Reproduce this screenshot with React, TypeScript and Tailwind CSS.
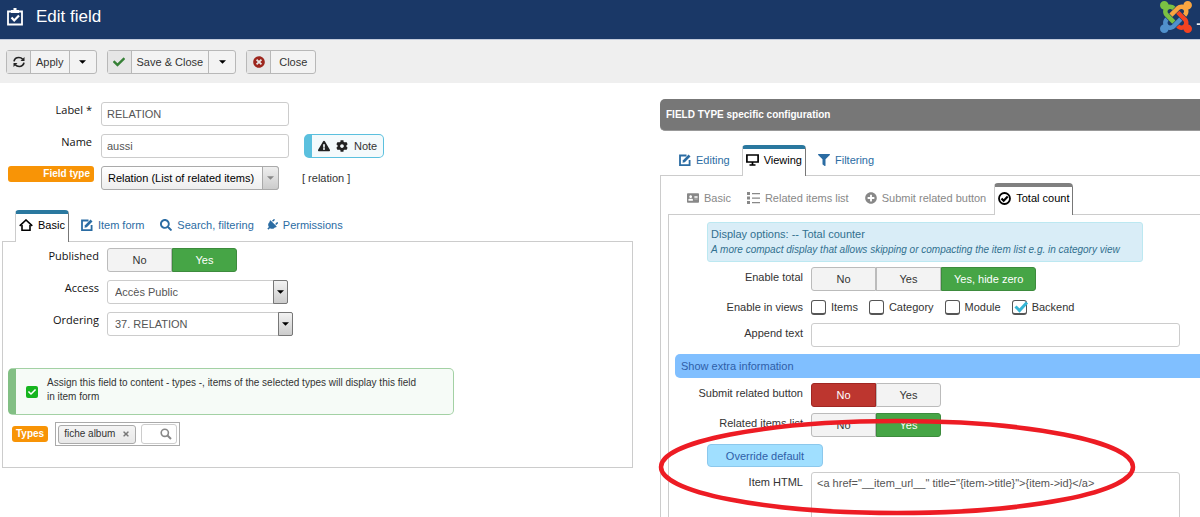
import { useState } from 'react'
import type { ReactNode } from 'react'
import clsx from 'clsx'
import {
  FaAddressCard,
  FaCheck,
  FaCog,
  FaExclamationTriangle,
  FaFilter,
  FaPlug,
  FaPlusCircle,
  FaSearch,
  FaTimes,
  FaTimesCircle,
} from 'react-icons/fa'

export default function App() {
  return (
    <div className="h-screen overflow-hidden bg-white font-['Liberation_Sans',Arial,sans-serif] text-[11px] leading-4 text-[#333]">
      <header className="flex h-[39px] items-center overflow-hidden bg-[#1a3867] pb-1.5 pl-[7px] text-white">
        <ClipboardIcon />
        <h1 className="ml-[13px] text-[17px] leading-5">Edit field</h1>
        <JoomlaLogo />
      </header>

      <div className="flex h-[44px] items-center gap-2.5 border-t border-[#c3cbdc] bg-[#efefef] px-1.5">
        <ToolbarButton icon={<RefreshIcon />} label="Apply" menu />
        <ToolbarButton icon={<FaCheck size={12} className="text-[#378137]" />} label="Save & Close" menu />
        <ToolbarButton icon={<FaTimesCircle size={12} className="text-[#9d261d]" />} label="Close" />
      </div>

      <main className="grid grid-cols-[55%_minmax(0,1fr)]">
        <GeneralSettings />
        <TypeSettings />
      </main>
    </div>
  )
}

function GeneralSettings() {
  return (
    <section className="pt-[19px] pr-[27px] pl-0.5">
      <div className="flex flex-col gap-2">
        <div className="flex">
          <label htmlFor="label" className="mr-[9px] w-[90px] text-right font-['Open_Sans',sans-serif] font-medium text-[#111]">
            Label *
          </label>
          <input id="label" defaultValue="RELATION" className="h-6 w-[188px] rounded-[3px] border border-[#ccc] px-[5px] text-[#555]" />
        </div>
        <div className="flex">
          <label htmlFor="name" className="mr-[9px] w-[90px] text-right font-['Open_Sans',sans-serif] font-medium text-[#111]">
            Name
          </label>
          <input id="name" defaultValue="aussi" className="h-6 w-[188px] rounded-[3px] border border-[#ccc] px-[5px] text-[#555]" />
          <button className="ml-[15px] flex h-6 items-center rounded-[5px] border border-l-8 border-[#5bc0de] bg-[#f4fafc] px-1.5">
            <FaExclamationTriangle size={12} className="mr-1.5 text-[#222]" />
            <FaCog size={12} className="mr-1.5 text-[#222]" />
            Note
          </button>
        </div>
        <div className="flex">
          <label htmlFor="type" className="mr-[7px] ml-1.5 h-4 w-[86px] rounded-[3px] bg-[#f89406] pr-1 text-right text-[10px] leading-4 font-bold text-white">
            Field type
          </label>
          <div className="relative w-[178px]">
            <select id="type" className="h-6 w-full appearance-none rounded-[3px] border border-[#aaa] bg-gradient-to-b from-white to-[#eee] pl-1.5 text-black">
              <option>Relation (List of related items)</option>
            </select>
            <span className="pointer-events-none absolute inset-y-0 right-0 flex w-[17px] items-center justify-center rounded-r-[3px] border border-[#aaa] bg-gradient-to-b from-[#eee] to-[#ccc] text-[#888]">
              <Caret />
            </span>
          </div>
          <span className="ml-[23px] self-center">[ relation ]</span>
        </div>
      </div>

      <nav className="mt-5 ml-[13px] flex h-8">
        <Tab active edge="border-t-[#2a789f]" icon={<HomeIcon />}>Basic</Tab>
        <Tab className="ml-3 text-[#2b6ca3]" icon={<EditIcon />}>Item form</Tab>
        <Tab className="ml-4 text-[#2b6ca3]" icon={<FaSearch size={12} />}>Search, filtering</Tab>
        <Tab className="ml-3 text-[#2b6ca3]" icon={<FaPlug size={12} className="rotate-45" />}>Permissions</Tab>
      </nav>

      <div className="-mt-px border border-[#ccc] pt-1.5 pb-[21px]">
        <div className="flex flex-col gap-2">
          <div className="flex">
            <span id="published" className="mr-2 w-[96px] text-right font-['Open_Sans',sans-serif] font-medium text-[#111]">
              Published
            </span>
            <Toggle labelledBy="published" options={['No', 'Yes']} initial={1} />
          </div>
          <div className="flex">
            <label htmlFor="access" className="mr-2 w-[96px] text-right font-['Open_Sans',sans-serif] font-medium text-[#111]">
              Access
            </label>
            <div className="relative w-[181px]">
              <select id="access" className="h-6 w-full appearance-none rounded-[3px] border border-[#ccc] bg-white pl-[7px] text-[#555]">
                <option>Accès Public</option>
              </select>
              <SelectArrow />
            </div>
          </div>
          <div className="flex">
            <label htmlFor="ordering" className="mr-2 w-[96px] text-right font-['Open_Sans',sans-serif] font-medium text-[#111]">
              Ordering
            </label>
            <div className="relative w-[186px]">
              <select id="ordering" className="h-6 w-full appearance-none rounded-[3px] border border-[#ccc] bg-white pl-[7px] text-[#555]">
                <option>37. RELATION</option>
              </select>
              <SelectArrow />
            </div>
          </div>
        </div>

        <div className="mt-8 ml-[5px] flex h-[47px] w-[446px] items-center rounded-[5px] border border-l-8 border-[#a3d1a4] border-l-[#82bf84] bg-[#f6fbf7] pl-2.5">
          <span className="flex size-3 shrink-0 items-center justify-center rounded-[2px] bg-[#16b51f] text-white">
            <FaCheck size={8} />
          </span>
          <p className="ml-[9px] pb-1 text-[10px] leading-[14px]">
            Assign this field to content - types -, items of the selected types will display this field
            <br />
            in item form
          </p>
        </div>

        <div className="mt-[7px] ml-[9px] flex">
          <label htmlFor="types" className="mt-1 h-4 rounded-[3px] bg-[#f89406] px-1 text-[10px] leading-4 font-bold text-white">
            Types
          </label>
          <div className="ml-[7px] flex h-6 items-center gap-[5px] border border-[#aaa] px-0.5">
            <button className="flex h-[19px] items-center gap-[7px] rounded-[3px] border border-[#aaa] bg-gradient-to-b from-[#f4f4f4] to-[#e8e8e8] px-[5px] text-[10px]">
              fiche album
              <FaTimes size={8} className="text-[#777]" />
            </button>
            <span className="flex h-5 items-center rounded-[3px] border border-[#ccc] pr-1 text-[#888]">
              <input id="types" className="w-[18px]" />
              <svg viewBox="0 0 12 12" className="size-3" fill="none" stroke="currentColor" strokeWidth="1.6">
                <circle cx="4.8" cy="4.8" r="3.6" />
                <path d="M7.5 7.5 11 11" strokeWidth="2" />
              </svg>
            </span>
          </div>
        </div>
      </div>
    </section>
  )
}

function TypeSettings() {
  return (
    <section className="relative pt-4">
      <h2 className="rounded-l-[5px] border-b border-[#999] bg-[#777] px-1.5 text-[10px] leading-[31px] font-bold text-white">
        FIELD TYPE specific configuration
      </h2>

      <nav className="mt-3.5 ml-[19px] flex h-[31px]">
        <Tab className="mr-3 text-[#2b6ca3]" icon={<EditIcon />}>Editing</Tab>
        <Tab active edge="border-t-[#2a789f]" icon={<MonitorIcon />}>Viewing</Tab>
        <Tab className="ml-3 text-[#2b6ca3]" icon={<FaFilter size={12} />}>Filtering</Tab>
      </nav>

      <div className="-mt-px border-t border-l border-[#ccc] pt-[7px] pl-[7px]">
        <nav className="ml-[19px] flex h-8 text-[#888]">
          <Tab icon={<FaAddressCard size={12} />}>Basic</Tab>
          <Tab className="ml-4" icon={<ListIcon />}>Related items list</Tab>
          <Tab className="mr-2 ml-4" icon={<FaPlusCircle size={12} />}>Submit related button</Tab>
          <Tab active edge="border-t-[#808080]" icon={<CheckCircleIcon />}>Total count</Tab>
        </nav>

        <div className="-mt-px border-t border-l border-[#ccc] pt-[7px]">
          <div className="ml-[38px] w-[436px] rounded-[3px] border border-[#bce8f1] bg-[#d9edf7] px-[3px] py-[3px] text-[#31708f]">
            <p>Display options: -- Total counter</p>
            <p className="text-[10px] leading-4 italic">A more compact display that allows skipping or compacting the item list e.g. in category view</p>
          </div>

          <div className="mt-[5px] flex">
            <span id="total" className="mr-2 w-[134px] text-right leading-5">Enable total</span>
            <Toggle labelledBy="total" options={['No', 'Yes', 'Yes, hide zero']} initial={2} />
          </div>
          <div className="mt-2 flex">
            <span className="mr-2 w-[134px] text-right">Enable in views</span>
            <div className="flex gap-[11px]">
              <ViewCheckbox label="Items" />
              <ViewCheckbox label="Category" />
              <ViewCheckbox label="Module" />
              <ViewCheckbox label="Backend" initial />
            </div>
          </div>
          <div className="mt-2 flex">
            <label htmlFor="append" className="mr-2 w-[134px] text-right leading-5">Append text</label>
            <input id="append" className="mr-5 h-6 flex-1 rounded-[3px] border border-[#ccc] px-[5px]" />
          </div>

          <button className="mt-[7px] ml-1.5 block h-6 w-full rounded-[5px] bg-[#80bfff] px-1.5 text-left text-[#2f5ea8]">
            Show extra information
          </button>

          <div className="mt-[5px] flex">
            <span id="submit" className="mr-2 w-[134px] text-right leading-5">Submit related button</span>
            <Toggle labelledBy="submit" options={['No', 'Yes']} initial={0} />
          </div>
          <div className="mt-1.5 flex">
            <span id="related" className="mr-2 w-[134px] text-right leading-5">Related items list</span>
            <Toggle labelledBy="related" options={['No', 'Yes']} initial={1} />
          </div>
          <button className="mt-[7px] ml-[38px] block h-[23px] w-[116px] rounded-[4px] border border-[#8cc8ec] bg-[#a0dfff] text-[#2f5ea8]">
            Override default
          </button>
          <div className="mt-[5px] flex">
            <label htmlFor="html" className="mr-2 w-[134px] text-right leading-5">Item HTML</label>
            <textarea
              id="html"
              spellCheck={false}
              defaultValue={'<a href="__item_url__" title="{item->title}">{item->id}</a>'}
              className="mr-5 h-20 flex-1 resize-none rounded-[3px] border border-[#ccc] px-[5px] py-0.5 text-[#555]"
            />
          </div>
        </div>
      </div>

      {/* hand-drawn highlight round the override fields */}
      <svg viewBox="0 0 480 100" className="pointer-events-none absolute top-[334px] -left-1 h-[100px] w-[480px]">
        <ellipse cx="241" cy="50" rx="236" ry="46" fill="none" stroke="#ed1c24" strokeWidth="4.500" />
      </svg>
    </section>
  )
}

function ToolbarButton({ icon, label, menu }: { icon: ReactNode; label: string; menu?: boolean }) {
  return (
    <div className="flex h-6 rounded-[3px] border border-[#b8b8b8] bg-[#f3f3f3]">
      <button className="flex items-center">
        <span className="flex h-full w-6 items-center justify-center border-r border-[#b8b8b8] bg-[#e6e6e6]">{icon}</span>
        <span className={menu ? 'px-[5px]' : 'px-2'}>{label}</span>
      </button>
      {menu && (
        <button aria-label={`${label} options`} className="flex w-[27px] items-center justify-center border-l border-[#b8b8b8] text-black">
          <Caret />
        </button>
      )}
    </div>
  )
}

function Tab({
  active,
  edge,
  icon,
  className,
  children,
}: {
  active?: boolean
  edge?: string
  icon: ReactNode
  className?: string
  children: ReactNode
}) {
  return (
    <a
      href="#"
      className={clsx(
        'flex shrink-0 items-center gap-[5px] whitespace-nowrap',
        active && 'z-10 rounded-t-[4px] border-x border-t-4 border-r-[#777] border-l-[#ccc] bg-white px-[3px] pb-1.5 text-black',
        !active && 'pb-0.5',
        edge,
        className,
      )}
    >
      {icon}
      {children}
    </a>
  )
}

function Toggle({ labelledBy, options, initial }: { labelledBy: string; options: string[]; initial: number }) {
  const [selected, setSelected] = useState(initial)
  return (
    <div role="group" aria-labelledby={labelledBy} className="flex h-6">
      {options.map((option, i) => (
        <button
          key={option}
          onClick={() => setSelected(i)}
          aria-pressed={i === selected}
          className={clsx(
            'min-w-[65px] border px-3 first:rounded-l-[3px] last:rounded-r-[3px]',
            i !== selected && 'border-[#bbb] bg-[#f3f3f3]',
            i === selected && option === 'No' && 'border-[#a02622] bg-[#bd362f] text-white',
            i === selected && option !== 'No' && 'border-[#3d8b3d] bg-[#46a546] text-white',
          )}
        >
          {option}
        </button>
      ))}
    </div>
  )
}

function ViewCheckbox({ label, initial = false }: { label: string; initial?: boolean }) {
  const [checked, setChecked] = useState(initial)
  return (
    <label className="flex items-center">
      <span className="relative mr-[5px] flex">
        <input
          type="checkbox"
          checked={checked}
          onChange={(e) => setChecked(e.target.checked)}
          className="size-[15px] appearance-none rounded-[3px] border border-b-2 border-[#555] bg-white"
        />
        {checked && (
          <svg viewBox="0 0 16 14" className="pointer-events-none absolute top-0 left-0.5 h-3.5 w-4" fill="none" stroke="#35b5d5" strokeWidth="3">
            <path d="M1.500 6.500 5.500 10.500 13 2.500" />
          </svg>
        )}
      </span>
      {label}
    </label>
  )
}

function SelectArrow() {
  return (
    <span className="pointer-events-none absolute inset-y-0 right-0 flex w-[15px] items-center justify-center rounded-r-[2px] border border-[#777] bg-gradient-to-b from-[#f2f2f2] to-[#ccc] text-black">
      <Caret />
    </span>
  )
}

function Caret() {
  return (
    <svg viewBox="0 0 8 4" className="h-1 w-[7px]" fill="currentColor">
      <path d="M0 0h8L4 4z" />
    </svg>
  )
}

function ClipboardIcon() {
  return (
    <svg viewBox="0 0 16 18" className="h-[18px] w-4" fill="none" stroke="currentColor" strokeWidth="1.8">
      <path d="M1 3.500h14v13H1z" />
      <path d="M4 2h8v3H4zM6.500 0h3v2h-3z" fill="currentColor" stroke="none" />
      <path d="m4.500 9.500 2.700 3L12 7.500" strokeWidth="2.200" />
    </svg>
  )
}

function RefreshIcon() {
  return (
    <svg viewBox="0 0 12 12" className="size-3" fill="none" stroke="#222" strokeWidth="1.700">
      <path d="M1 5.300C1.500 2.900 3.400 1.500 5.800 1.500c1.600 0 2.900.6 3.900 1.800M11 6.700c-.5 2.400-2.400 3.800-4.800 3.800-1.600 0-2.900-.6-3.900-1.800" />
      <path d="M11.500 1v4h-4zM.5 11V7h4z" fill="#222" stroke="none" />
    </svg>
  )
}

function EditIcon() {
  return (
    <svg viewBox="0 0 12 12" className="size-3" fill="none" stroke="currentColor" strokeWidth="1.800">
      <path d="M7.500 1.500H1v9.600h9.600V6" />
      <path d="M3.500 8.700 4 6.300 9.600.6l1.900 1.900-5.700 5.700z" fill="currentColor" stroke="none" />
    </svg>
  )
}

function HomeIcon() {
  return (
    <svg viewBox="0 0 14 12" className="h-3 w-3.5" fill="none" stroke="currentColor" strokeWidth="1.600">
      <path d="M.7 6.800 7 1l6.300 5.800" />
      <path d="M3 6v5.200h8V6" />
    </svg>
  )
}

function MonitorIcon() {
  return (
    <svg viewBox="0 0 13 12" className="h-3 w-[13px]" fill="none" stroke="currentColor" strokeWidth="1.700">
      <path d="M.9 1h11.200v7H.9z" />
      <path d="M6.500 8v3M3.500 11h6" />
    </svg>
  )
}

function ListIcon() {
  return (
    <svg viewBox="0 0 13 12" className="h-3 w-[13px]" fill="currentColor">
      <path d="M0 0h3v3H0zM0 4.500h3v3H0zM0 9h3v3H0zM5 1h8v1.300H5zM5 5.400h8v1.300H5zM5 9.900h8v1.300H5z" />
    </svg>
  )
}

function CheckCircleIcon() {
  return (
    <svg viewBox="0 0 13 13" className="size-[13px]" fill="none" stroke="currentColor" strokeWidth="1.800">
      <circle cx="6.500" cy="6.500" r="5.500" />
      <path d="m3.500 6.500 2.200 2.200L9.700 4.500" strokeWidth="2.200" />
    </svg>
  )
}

function JoomlaLogo() {
  return (
    <svg viewBox="0 18 560 462" className="ml-auto h-[33px] w-10 shrink-0 self-start">
      <path fill="#7ac143" d="M.6 92.100C.6 58.800 27.400 32 60.400 32c30 0 54.500 21.900 59.200 50.200 32.600-7.600 67.100.6 96.500 30l-44.300 44.300c-20.500-20.500-42.600-16.300-55.400-3.500-14.300 14.300-14.300 37.900 0 52.200l99.500 99.500-44 44.300c-87.700-87.200-49.700-49.700-99.800-99.700-26.800-26.500-35-64.800-24.800-98.900C20.400 144.600.6 120.700.6 92.100z" />
      <path fill="#f9a541" d="M130.100 208.500l44.300 44.300c10-10 89.700-89.700 99.700-99.800 14.300-14.300 37.600-14.300 51.900 0 12.800 12.800 17 35-3.500 55.400l44 44.300c31.200-31.200 38.500-67.600 28.900-101.200 29.200-4.100 51.900-29.200 51.900-59.500 0-33.200-26.800-60.100-59.800-60.100-30.300 0-55.400 22.500-59.500 51.600-33.800-9.900-71.700-1.500-98.300 25.100-18.300 19.100-71.100 71.500-99.600 99.900z" />
      <path fill="#f44321" d="M396.400 360.700c8.200-32.700-.9-68.500-26.300-93.900-11.800-12.200 5 4.700-99.500-99.700l-44.300 44.300 99.700 99.700c14.300 14.300 14.300 37.600 0 51.900-12.800 12.800-35 17-55.400-3.500l-44 44.300c27.600 30.200 68 38.800 102.700 28 5.500 27.400 29.700 48.100 58.900 48.100 33 0 59.800-26.800 59.800-60.100 0-30.200-22.500-55-51.600-59.100z" />
      <path fill="#5091cd" d="M312.100 307.600l-44-44.300c-87 86.400-50.400 50.400-99.700 99.800-14.300 14.300-37.600 14.300-51.900 0-13.100-13.400-16.900-35.300 3.200-55.400l-44-44.300c-30.200 30.200-38 65.200-29.500 98.300-26.700 6-46.200 29.900-46.200 58.200C0 453.200 26.800 480 59.800 480c28.600 0 52.500-19.800 58.600-46.700 32.700 8.200 68.500-.6 94.200-26 32.100-32 12.200-12.400 99.500-99.700z" />
      <path fill="#fff" d="M515 345h45v22h-45z" />
    </svg>
  )
}
